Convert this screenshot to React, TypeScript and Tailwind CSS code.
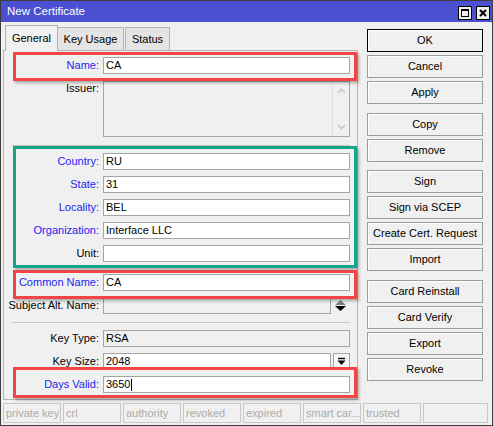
import React from 'react'

const blue = 'text-[#2424f0]'

function Field({ label, value, labelBlue, mt, children }: { label: string; value?: string; labelBlue?: boolean; mt: string; children?: React.ReactNode }) {
  return (
    <div className={`flex items-center h-[17px] ${mt}`}>
      <div className={`w-[96px] text-right pr-[1px] leading-[17px] ${labelBlue ? blue : 'text-black'}`}>{label}</div>
      {children ?? (
        <div className="ml-[3px] w-[247px] h-[17px] bg-white border border-[#a5a5a5] pl-[2px] leading-[15px]">{value}</div>
      )}
    </div>
  )
}

function Btn({ label, def, mt }: { label: string; def?: boolean; mt?: string }) {
  return (
    <div
      className={`h-[23px] w-[116px] flex items-center justify-center bg-[#f0f0f0] border ${def ? 'border-black' : 'border-[#9c9c9c]'} shadow-[inset_1px_1px_0_#ffffff] ${mt ?? 'mt-[3px]'}`}
    >
      {label}
    </div>
  )
}

function Box({ cls }: { cls: string }) {
  // annotation frame drawn over the form
  return <div className={`absolute w-[344px] border-[3px] pointer-events-none shadow-[2px_2px_3px_rgba(0,0,0,0.3)] ${cls}`} />
}

export default function App() {
  const cells = ['private key', 'crl', 'authority', 'revoked', 'expired', 'smart car...', 'trusted']

  return (
    <div className="w-[493px] h-[426px] bg-[#f0f0f0] border border-[#3c3c3c] flex flex-col overflow-hidden font-['Liberation_Sans',Arial,sans-serif] text-[11px] text-black">
      {/* title bar */}
      <div className="h-[21px] shrink-0 bg-[#4b50d0] flex items-center pl-[6px] pr-[2px] text-white text-[11.5px]">
        <span className="flex-1">New Certificate</span>
        <div className="w-[14px] h-[14px] border border-black bg-[#f0f0f0] flex items-center justify-center mt-[3px]">
          <div className="w-[8px] h-[8px] border border-black border-t-2" />
        </div>
        <div className="w-[14px] h-[14px] border border-black bg-[#f0f0f0] flex items-center justify-center ml-[4px] mt-[3px]">
          <svg width="8" height="8" viewBox="0 0 8 8">
            <path d="M1 1 L7 7 M7 1 L1 7" stroke="black" strokeWidth="2" />
          </svg>
        </div>
      </div>

      <div className="flex h-[378px] shrink-0">
        {/* left: tabs + panel */}
        <div className="ml-[2px] w-[355px] flex flex-col">
          <div className="h-[25px] mt-[3px] flex items-end pl-[2px] relative z-10">
            <div className="h-[26px] w-[53px] -mb-px bg-[#f0f0f0] border border-b-0 border-[#b4b4b4] flex items-center justify-center">General</div>
            <div className="h-[23px] w-[66px] bg-[#e4e4e4] border border-b-0 border-l-0 border-[#b4b4b4] flex items-center justify-center">Key Usage</div>
            <div className="h-[23px] w-[45px] ml-px bg-[#e4e4e4] border border-b-0 border-[#b4b4b4] flex items-center justify-center">Status</div>
          </div>
          <div className="relative h-[350px] border border-[#b4b4b4] flex flex-col">
            <Field label="Name:" value="CA" labelBlue mt="mt-[6px]" />
            <div className="flex mt-[7px]">
              <div className="w-[96px] text-right pr-[1px] leading-[15px]">Issuer:</div>
              <div className="ml-[3px] w-[247px] h-[56px] bg-[#f0f0f0] border border-[#a5a5a5] flex justify-end">
                <div className="w-[17px] border-l border-[#e0e0e0] flex flex-col items-center justify-between py-[6px]">
                  <svg width="9" height="6" viewBox="0 0 9 6"><path d="M1 5 L4.5 1.5 L8 5" stroke="#c8c8c8" strokeWidth="1.6" fill="none" /></svg>
                  <svg width="9" height="6" viewBox="0 0 9 6"><path d="M1 1 L4.5 4.5 L8 1" stroke="#c8c8c8" strokeWidth="1.6" fill="none" /></svg>
                </div>
              </div>
            </div>
            <div className="ml-[8px] w-[338px] h-px bg-[#c8c8c8] mt-[8px]" />
            <Field label="Country:" value="RU" labelBlue mt="mt-[7px]" />
            <Field label="State:" value="31" labelBlue mt="mt-[6px]" />
            <Field label="Locality:" value="BEL" labelBlue mt="mt-[6px]" />
            <Field label="Organization:" value="Interface LLC" labelBlue mt="mt-[6px]" />
            <Field label="Unit:" value="" mt="mt-[6px]" />
            <Field label="Common Name:" value="CA" labelBlue mt="mt-[12px]" />
            <Field label="Subject Alt. Name:" mt="mt-[6px]">
              <div className="ml-[3px] w-[228px] h-[17px] bg-[#f0f0f0] border border-[#a5a5a5]" />
              <div className="w-[19px] flex flex-col items-center justify-center gap-[1px]">
                <svg width="11" height="5" viewBox="0 0 11 5"><path d="M5.5 0 L11 5 L0 5 Z" fill="#808080" /></svg>
                <svg width="11" height="5" viewBox="0 0 11 5"><path d="M0 0 L11 0 L5.5 5 Z" fill="#000" /></svg>
              </div>
            </Field>
            <div className="ml-[8px] w-[338px] h-px bg-[#c8c8c8] mt-[8px]" />
            <Field label="Key Type:" mt="mt-[7px]">
              <div className="ml-[3px] w-[247px] h-[17px] bg-[#f0f0f0] border border-[#a5a5a5] pl-[2px] leading-[15px]">RSA</div>
            </Field>
            <Field label="Key Size:" mt="mt-[6px]">
              <div className="ml-[3px] w-[228px] h-[17px] bg-white border border-[#a5a5a5] pl-[2px] leading-[15px]">2048</div>
              <div className="ml-[2px] w-[17px] h-[17px] bg-[#f6f6f6] border border-[#a5a5a5] flex items-center justify-center">
                <svg width="9" height="9" viewBox="0 0 9 9"><path d="M1 1.5 H8" stroke="#000" strokeWidth="1.4" /><path d="M0.5 3.5 H8.5 L4.5 8 Z" fill="#000" /></svg>
              </div>
            </Field>
            <Field label="Days Valid:" labelBlue mt="mt-[6px]">
              <div className="ml-[3px] w-[247px] h-[17px] bg-white border border-[#a5a5a5] pl-[2px] leading-[15px] flex items-center">
                3650<span className="w-px h-[12px] bg-black ml-px" />
              </div>
            </Field>

            <Box cls="left-[9px] top-[1px] h-[29px] border-[#f24646]" />
            <Box cls="left-[9px] top-[95px] h-[122px] border-[#16a589]" />
            <Box cls="left-[9px] top-[219px] h-[29px] border-[#f24646]" />
            <Box cls="left-[9px] top-[316px] h-[31px] border-[#f24646]" />
          </div>
        </div>

        {/* right: buttons */}
        <div className="ml-[9px] pt-[7px] flex flex-col">
          <Btn label="OK" def mt="mt-0" />
          <Btn label="Cancel" />
          <Btn label="Apply" />
          <Btn label="Copy" mt="mt-[9px]" />
          <Btn label="Remove" />
          <Btn label="Sign" mt="mt-[8px]" />
          <Btn label="Sign via SCEP" />
          <Btn label="Create Cert. Request" />
          <Btn label="Import" />
          <Btn label="Card Reinstall" mt="mt-[9px]" />
          <Btn label="Card Verify" />
          <Btn label="Export" />
          <Btn label="Revoke" />
        </div>
      </div>

      {/* status bar */}
      <div className="flex gap-[2px] pl-[2px] mt-[3px] h-[20px]">
        {cells.map((c) => (
          <div key={c} className="w-[58px] h-[20px] border border-[#c8c8c8] text-[#ababab] text-[11px] pl-[2px] leading-[18px] whitespace-nowrap">
            {c}
          </div>
        ))}
        <div className="w-[65px] h-[20px] border border-[#c8c8c8]" />
      </div>
    </div>
  )
}
